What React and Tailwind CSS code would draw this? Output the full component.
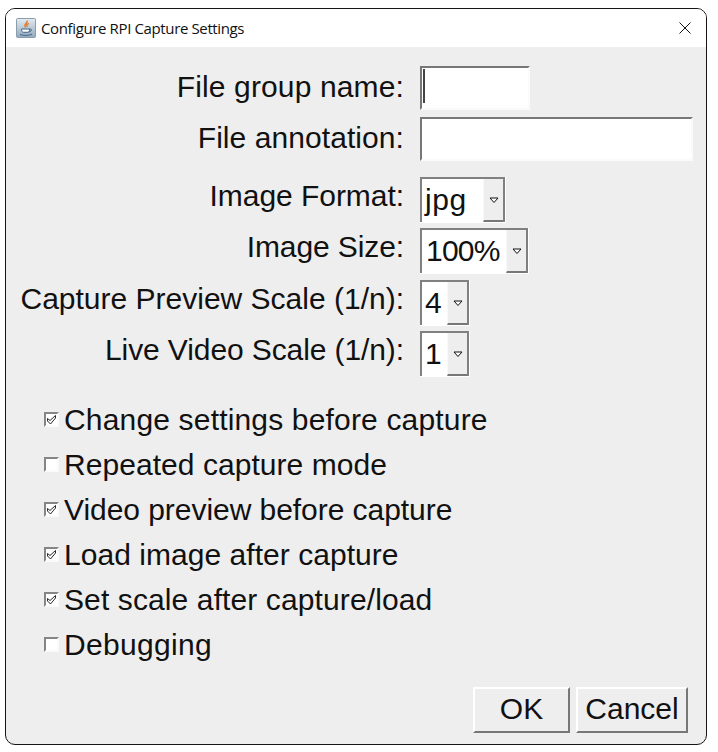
import React from "react";

function Label({ children, className = "" }) {
  return (
    <label className={`w-[398px] shrink-0 text-right whitespace-pre ${className}`}>{children}</label>
  );
}

function TextField({ className, caret }) {
  return (
    <div
      className={`h-[44px] border-2 border-t-[#77777a] border-l-[#77777a] border-b-[#fafafa] border-r-[#fafafa] bg-white ${className}`}
    >
      {caret && <div className="mt-px ml-px h-[34px] w-[2px] bg-[#444]" />}
    </div>
  );
}

function Combo({ value, className, pad }) {
  return (
    <div className={`flex h-[46px] border-r border-b border-white ${className}`}>
      <div className="flex flex-1 border-2 border-[#808080] border-b-0 bg-white">
        <span className={`flex-1 leading-[42px] ${pad}`}>{value}</span>
        <div className="flex w-[20px] items-center justify-center border-b-2 border-l border-b-[#777] border-l-[#f8f8f8] bg-[#eee]">
          <svg width="10" height="7" viewBox="0 0 10 7" className="mt-px">
            <path d="M1 1h8L5 5.5z" fill="white" stroke="#111" strokeWidth="1" />
          </svg>
        </div>
      </div>
    </div>
  );
}

function Check({ checked, children, spacing = "" }) {
  return (
    <div className="flex h-[45px] items-center">
      <div className="mr-[5px] h-[15px] w-[15px] shrink-0 border-2 border-t-[#858585] border-l-[#858585] border-b-[#fafafa] border-r-[#fafafa] bg-white">
        {checked && (
          <svg width="11" height="11" viewBox="0 0 11 11">
            <path d="M1.500 4.500L4 6.500L9.500 1.500V4L4.500 10L1.500 7z" fill="white" stroke="#111" strokeWidth=".9" />
          </svg>
        )}
      </div>
      <span className={`whitespace-pre leading-[45px] ${spacing}`}>{children}</span>
    </div>
  );
}

function Button({ children, className }) {
  return (
    <button
      className={`h-[46px] border-2 border-t-white border-l-white border-b-[#777] border-r-[#777] bg-[#eee] pb-[3px] leading-[34px] whitespace-pre ${className}`}
    >
      {children}
    </button>
  );
}

export default function App() {
  return (
    <div className="h-[752px] w-[718px] overflow-hidden bg-white pt-[8px] pl-[5px] font-['Liberation_Sans',Arial,sans-serif] text-[30px] text-[#111]">
      <div className="flex h-[737px] w-[702px] flex-col overflow-hidden rounded-[10px] border border-[#151515] bg-[#eee]">
        <header className="flex h-[38px] shrink-0 items-center bg-white pl-[10px] pr-[14px]">
          <svg width="20" height="20" viewBox="0 0 20 20">
            <defs>
              <linearGradient id="tile" x2="0" y2="1">
                <stop stopColor="#e4ebf0" />
                <stop offset="1" stopColor="#91a9bd" />
              </linearGradient>
            </defs>
            <rect x=".5" y=".5" width="19" height="19" rx="1" fill="url(#tile)" stroke="#8a9dac" />
            <path d="M11 2.500C12.500 5 7 6 9.500 9.500M13 5.500c-3 1-2.500 2-1.500 3.500" fill="none" stroke="#e27b2c" strokeWidth="1.400" />
            <path d="M5.500 11h8v1.500c0 1.200-.8 1.800-2 1.800h-4c-1.200 0-2-1-2-3.300z" fill="#f7fafc" stroke="#41678b" />
            <path d="M13.500 11c3-.5 2.500 2.500-1 3M4 16.500c3 1.200 9 1.200 12-.3" fill="none" stroke="#41678b" />
          </svg>
          <span className="ml-[5px] flex-1 whitespace-pre font-['Open_Sans',sans-serif] text-[15px] leading-[36px] tracking-[-0.37px]">Configure RPI Capture Settings</span>
          <svg width="14" height="14" viewBox="0 0 14 14">
            <path d="M1.500 1.500l11 11M12.500 1.500L1.500 12.500" stroke="#111" strokeWidth="1" />
          </svg>
        </header>
        <main className="flex min-h-0 flex-1 flex-col pt-[19px]">
          <div className="flex h-[51px] gap-[16px]">
            <Label className="leading-[42px] tracking-[0.13px]">File group name:</Label>
            <TextField className="w-[110px]" caret />
          </div>
          <div className="flex h-[60px] gap-[16px]">
            <Label className="leading-[42px] tracking-[0.07px]">File annotation:</Label>
            <TextField className="w-[273px]" />
          </div>
          <div className="flex h-[51px] gap-[16px]">
            <Label className="leading-[37px] tracking-[-0.05px]">Image Format:</Label>
            <Combo value="jpg" className="w-[86px]" pad="pl-[3px] tracking-[0.6px]" />
          </div>
          <div className="flex h-[52px] gap-[16px]">
            <Label className="leading-[37px] tracking-[-0.1px]">Image Size:</Label>
            <Combo value="100%" className="w-[109px]" pad="pl-[4px] tracking-[-0.8px]" />
          </div>
          <div className="flex h-[51px] gap-[16px]">
            <Label className="leading-[37px]">Capture Preview Scale (1/n):</Label>
            <Combo value="4" className="w-[50px]" pad="pl-[3px]" />
          </div>
          <div className="flex h-[66px] gap-[16px]">
            <Label className="leading-[37px] tracking-[-0.1px]">Live Video Scale (1/n):</Label>
            <Combo value="1" className="w-[50px]" pad="pl-[3px]" />
          </div>
          <div className="flex flex-col pl-[38px]">
            <Check checked spacing="tracking-[0.17px]">Change settings before capture</Check>
            <Check spacing="tracking-[0.05px]">Repeated capture mode</Check>
            <Check checked spacing="tracking-[-0.05px]">Video preview before capture</Check>
            <Check checked spacing="tracking-[0.04px]">Load image after capture</Check>
            <Check checked spacing="tracking-[0.11px]">Set scale after capture/load</Check>
            <Check spacing="tracking-[0.33px]">Debugging</Check>
          </div>
          <div className="mt-[20px] flex justify-end gap-[6px] pr-[18px]">
            <Button className="w-[97px]">OK</Button>
            <Button className="w-[112px]">Cancel</Button>
          </div>
        </main>
      </div>
    </div>
  );
}
